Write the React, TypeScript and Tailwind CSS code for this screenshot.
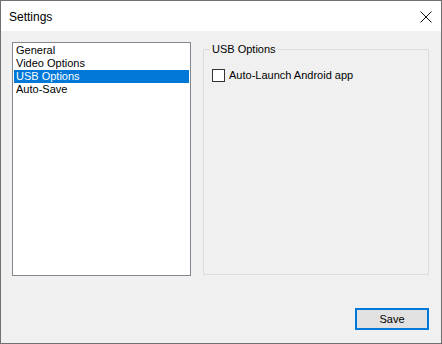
import { useState } from 'react'

const pages = ['General', 'Video Options', 'USB Options', 'Auto-Save']

export default function App() {
  const [selected, setSelected] = useState('USB Options')
  const [autoLaunch, setAutoLaunch] = useState(false)

  return (
    <div
      className="w-[442px] h-[344px] flex flex-col border border-[#707070] bg-[#f0f0f0] text-[11px] text-black"
      style={{ fontFamily: '"Liberation Sans", Arial, sans-serif' }}
    >
      {/* Title bar */}
      <div className="h-[30px] flex items-center justify-between bg-white pl-[8px] pr-[9px] shrink-0">
        <span className="text-[12px] mt-[2px]">Settings</span>
        <svg width="12" height="12" viewBox="0 0 12 12" className="mt-[1px]">
          <path d="M0.5 0.5 L11.5 11.5 M11.5 0.5 L0.5 11.5" stroke="#111" strokeWidth="1" />
        </svg>
      </div>

      {/* Body */}
      <div className="flex-1 flex flex-col pl-[11px] pr-[12px] pt-[11px]">
        <div className="flex gap-[12px]">
          {/* Page list */}
          <div className="w-[179px] h-[234px] border border-[#828790] bg-white p-[1px]">
            {pages.map(p => (
              <div
                key={p}
                onClick={() => setSelected(p)}
                className={`h-[13px] leading-[13px] pl-[2px] ${p === selected ? 'bg-[#0078d7] text-white' : ''}`}
              >
                {p}
              </div>
            ))}
          </div>

          {/* Group box */}
          <fieldset className="w-[226px] h-[233px] border border-[#dcdcdc] px-[6px] pt-[6px]">
            <legend className="px-[2px] leading-[14px]">USB Options</legend>
            <label className="flex items-center gap-[4px] ml-[2px] mt-[5px]" onClick={() => setAutoLaunch(!autoLaunch)}>
              <span className="w-[13px] h-[13px] border border-[#333333] bg-white flex items-center justify-center">
                {autoLaunch && (
                  <svg width="9" height="9" viewBox="0 0 9 9">
                    <path d="M1 4.5 L3.5 7 L8 1.5" stroke="#111" strokeWidth="1.3" fill="none" />
                  </svg>
                )}
              </span>
              <span>Auto-Launch Android app</span>
            </label>
          </fieldset>
        </div>

        <div className="flex justify-end mt-[32px]">
          <button className="w-[74px] h-[22px] border-2 border-[#0078d7] bg-[#e1e1e1] text-[11px]">
            Save
          </button>
        </div>
      </div>
    </div>
  )
}
